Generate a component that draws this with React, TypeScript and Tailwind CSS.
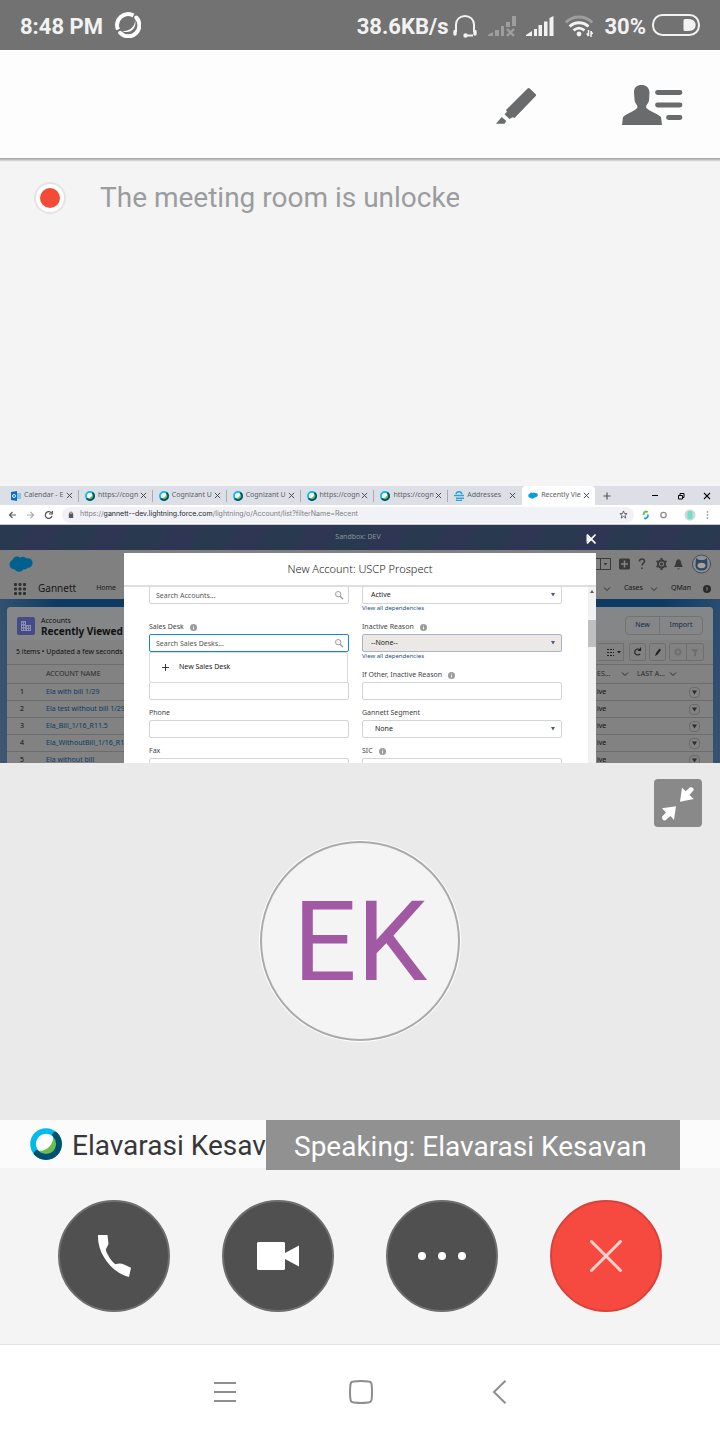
import type { ReactNode } from 'react';

function WebexMark({ className }: { className: string }) {
  return (
    <svg viewBox="0 0 32 32" className={className} aria-hidden="true">
      <circle cx="16" cy="16" r="11" fill="#6abf4b" />
      <path d="M8.500 23C4 18 5 9.500 11 6.500C15 4.500 20 5 23 8C24 15.500 18 23 8.500 23Z" fill="#ffffff" />
      <circle cx="16" cy="16" r="13" fill="none" stroke="#00bceb" strokeWidth="5.600" />
      <path d="M25.200 6.800A13 13 0 0 1 6.800 25.200" fill="none" stroke="#00506e" strokeWidth="5.800" strokeLinecap="round" />
    </svg>
  );
}

function StatusBar() {
  return (
    <header className="flex h-[50px] items-center bg-[#727272] px-5 pt-0.5 text-[22px] font-bold text-[#f2f2f2]">
      <span className="whitespace-nowrap">8:48 PM</span>
      <svg viewBox="0 0 26 26" className="-mt-0.5 ml-3 size-[26px]" aria-label="Webex running">
        <path d="M3 17.500A11 11 0 0 1 18.500 3.500" fill="none" stroke="#fff" strokeWidth="4" />
        <path d="M21.300 5.500A11 11 0 0 1 5.200 20.900" fill="none" stroke="#fff" strokeWidth="4" strokeLinecap="round" />
        <path d="M20 8C20.600 14 14.500 20 7.400 18.900C14 22.800 22.500 16.600 20 8Z" fill="#fff" />
      </svg>
      <span className="ml-auto whitespace-nowrap">38.6KB/s</span>
      <svg viewBox="0 0 24 24" className="ml-[5px] size-6" fill="none" stroke="#f2f2f2" strokeWidth="2" aria-label="Headset">
        <path d="M3 18V10.500C3 5.500 7 2 12 2S21 5.500 21 10.500V18" />
        <path d="M2 17.500V20M22 17.500V20" strokeWidth="3.400" strokeLinecap="round" />
        <path d="M12 21.500H20" />
        <circle cx="12.500" cy="21.500" r="1.200" fill="#f2f2f2" />
      </svg>
      <svg viewBox="0 0 28 22" className="ml-[11px] h-[22px] w-7" fill="#9e9e9e" aria-label="No signal on SIM 1">
        <path d="M0 21V20L5 17V21ZM7 15H11V21H7ZM13 11H16V21H13ZM18 7H22V12H18ZM24 1H28V11H24Z" />
        <path d="M19 14L26 21M26 14L19 21" stroke="#9e9e9e" strokeWidth="2.400" />
      </svg>
      <svg viewBox="0 0 28 22" className="ml-[10px] h-[22px] w-7" fill="#f2f2f2" aria-label="Full signal on SIM 2">
        <path d="M0 21V20L6 16V21ZM8 14H11V21H8ZM12.500 10H16V21H12.500ZM18 6.500H21.500V21H18ZM23.500 3L27.500 1V21H23.500Z" />
      </svg>
      <svg viewBox="0 0 28 24" className="ml-[11px] h-6 w-7" fill="none" aria-label="Wi-Fi">
        <path d="M.8 8.500C8 1.200 20 1.200 27.200 8.500" stroke="#9e9e9e" strokeWidth="3" />
        <path d="M4.500 12.500C10 7.500 18 7.500 23.500 12.500M8.500 16.300C12 13.500 16 13.500 19.500 16.300" stroke="#f2f2f2" strokeWidth="2.800" />
        <circle cx="14" cy="20" r="2.400" fill="#f2f2f2" />
        <path d="M23.500 16V22M21.800 19.500L23.500 22M26 23V17M26 17.500L27.600 20" stroke="#f2f2f2" strokeWidth="1.500" />
      </svg>
      <span className="ml-[11px]">30%</span>
      <svg viewBox="0 0 48 22" className="-mt-0.5 ml-[6px] h-[22px] w-12" aria-label="Battery at 30 percent">
        <rect x="1" y="1" width="46" height="20" rx="9.500" fill="none" stroke="#f2f2f2" strokeWidth="2" />
        <path d="M33 5H36.500C46 5 46 17 36.500 17H33Q31.500 17 31.500 15.500V6.500Q31.500 5 33 5Z" fill="#f2f2f2" />
      </svg>
    </header>
  );
}

function Toolbar() {
  return (
    <div className="relative z-10 flex h-[108px] items-center justify-end bg-[#fdfdfd] pr-9 shadow-[0_1px_0_#a9a9a9,0_2px_0_#bcbcbc,0_3px_0_#d2d2d2,0_4px_0_#ebebeb]">
      <button type="button" aria-label="Annotate" className="mr-21">
        <svg viewBox="0 -4 40 42" className="h-[42px] w-10" fill="#6a6b6d">
          <path d="M8.500 27.300L11 24.700L10 23L31.300 1.700Q32.600 .4 34 1.700L40 7.500Q40.300 8.500 39.500 9.300L18.500 31L16.500 30.300L13.500 32Z" />
          <path d="M5.700 30L10.300 34L8.500 36.700H0Z" />
        </svg>
      </button>
      <button type="button" aria-label="Participants">
        <svg viewBox="0 -1 64 44" className="h-11 w-16" fill="#6a6b6d">
          <path d="M14 9.500C14 4 17 2 21.500 2S29 4 29.500 9.500L29 17.500C28.500 20.500 26 21.500 26 24.500C30 29 36 29.500 41 34L42 42H2L3 34C8 29.500 14 29 17.500 24.500C17.500 21.500 15 20.500 14.600 17.500Z" />
          <path d="M37.500 9.500H60M37.500 22H60M48.500 34.500H60" stroke="#6a6b6d" strokeWidth="4.800" strokeLinecap="round" />
        </svg>
      </button>
    </div>
  );
}

function OutlookMark() {
  return (
    <svg viewBox="0 0 10 10" className="size-[10px] shrink-0" aria-hidden="true">
      <path d="M5 2H10V8H5Z" fill="#8cc2ea" />
      <path d="M0 1L6 0V10L0 9Z" fill="#0a6fc2" />
      <circle cx="3" cy="5" r="1.500" fill="none" stroke="#fff" strokeWidth=".9" />
    </svg>
  );
}

function AddressMark() {
  return (
    <svg viewBox="0 0 10 10" className="size-[10px] shrink-0" fill="none" stroke="#2aa6d5" strokeWidth="1.600" aria-hidden="true">
      <path d="M2 3C3 0 7 0 8 3M0 4.500H10M2 7.200H10M2 9C4 10 6 10 8 9" />
    </svg>
  );
}

function Cloud({ className, fill }: { className: string; fill: string }) {
  return (
    <svg viewBox="0 0 24 16" className={className} fill={fill} aria-hidden="true">
      <circle cx="5.500" cy="8.500" r="5" />
      <circle cx="8" cy="5" r="4.500" />
      <circle cx="14" cy="5" r="4.200" />
      <circle cx="18.800" cy="7" r="4.800" />
      <circle cx="10" cy="11" r="4.800" />
      <circle cx="15" cy="9.500" r="4" />
    </svg>
  );
}

function Cross({ className }: { className: string }) {
  return (
    <svg viewBox="0 0 8 8" className={className} stroke="currentColor" strokeWidth="1.100" aria-hidden="true">
      <path d="M1 1L7 7M7 1L1 7" />
    </svg>
  );
}

const tabs: { title: string; icon: 'mail' | 'webex' | 'address' | 'cloud' }[] = [
  { title: 'Calendar - E', icon: 'mail' },
  { title: 'https://cogn', icon: 'webex' },
  { title: 'Cognizant U', icon: 'webex' },
  { title: 'Cognizant U', icon: 'webex' },
  { title: 'https://cogn', icon: 'webex' },
  { title: 'https://cogn', icon: 'webex' },
  { title: 'Addresses', icon: 'address' },
  { title: 'Recently Vie', icon: 'cloud' },
];

function BrowserTabs() {
  return (
    <div className="flex h-[19px] shrink-0 items-center bg-[#dcdfe6] pl-[5px] text-[7px] text-[#5c6066]">
      <div className="flex h-full w-[590px] items-center">
        {tabs.map((tab, i) => {
          const active = i === 7;
          return (
            <div
              key={i}
              className={
                active
                  ? 'flex h-full min-w-0 flex-1 items-center rounded-t bg-white pl-1.5 pr-[5px]'
                  : 'flex h-3 min-w-0 flex-1 items-center border-r border-[#a8abb1] pl-1.5 pr-[5px] nth-7:border-transparent'
              }
            >
              {tab.icon === 'mail' && <OutlookMark />}
              {tab.icon === 'webex' && <WebexMark className="size-[10px] shrink-0" />}
              {tab.icon === 'address' && <AddressMark />}
              {tab.icon === 'cloud' && <Cloud className="h-[7px] w-[10px] shrink-0" fill="#0d9ddb" />}
              <span className="ml-[3px] whitespace-nowrap">{tab.title}</span>
              <button type="button" aria-label="Close tab" className="ml-auto shrink-0 text-[#44474c]">
                <Cross className="size-[7px]" />
              </button>
            </div>
          );
        })}
      </div>
      <button type="button" aria-label="New tab" className="ml-2">
        <svg viewBox="0 0 8 8" className="size-2" stroke="#55585d" strokeWidth="1.200"><path d="M4 .5V7.500M.5 4H7.500" /></svg>
      </button>
      <div className="ml-auto flex items-center gap-[18px] pr-[9px] text-black">
        <svg viewBox="0 0 8 8" className="size-2" stroke="#000" aria-label="Minimize"><path d="M1 3.500H7" /></svg>
        <svg viewBox="0 0 8 8" className="size-2" stroke="#000" fill="none" aria-label="Restore"><path d="M1.500 3.500H5.500V7H1.500ZM3 3V1.500H7V5.500H6" /></svg>
        <Cross className="size-2" />
      </div>
    </div>
  );
}

function AddressBar() {
  return (
    <div className="flex h-5 shrink-0 items-center border-b border-[#c9cacd] bg-white pl-2 pr-2">
      <svg viewBox="0 0 50 10" className="h-[10px] w-[50px] shrink-0" fill="none" strokeWidth="1.200" aria-hidden="true">
        <path d="M8 5H1.500M4.500 2L1.500 5L4.500 8" stroke="#5b5e63" />
        <path d="M19 5H25.500M22.500 2L25.500 5L22.500 8" stroke="#a8abb0" />
        <path d="M43.500 3A3.400 3.400 0 1 0 44 6M44.300 1V4H41" stroke="#4e5156" />
      </svg>
      <div className="ml-1 flex h-4 flex-1 items-center rounded-full bg-[#f1f2f6] pl-[6px] pr-[6px]">
        <svg viewBox="0 0 6 8" className="h-[7px] w-[6px]" aria-hidden="true">
          <path d="M.5 3H5.500V8H.5Z" fill="#55585d" /><path d="M1.500 3.500V2Q3 0 4.500 2V3.500" fill="none" stroke="#55585d" />
        </svg>
        <span className="ml-[6px] whitespace-nowrap font-[Inter,sans-serif] text-[7px] text-[#7b7e84]">
          https://<span className="text-[#24272b]">gannett--dev.lightning.force.com</span>/lightning/o/Account/list?filterName=Recent
        </span>
        <svg viewBox="0 0 10 10" className="ml-auto size-[9px]" fill="none" stroke="#55585d" aria-label="Bookmark"><path d="M5 1L6.100 4H9L6.700 5.900L7.500 9L5 7.200L2.500 9L3.300 5.900L1 4H3.900Z" /></svg>
      </div>
      <svg viewBox="0 0 70 12" className="ml-2 h-3 w-[70px] shrink-0" fill="none" aria-hidden="true">
        <path d="M1.500 6Q1.500 3 4 2.500L6 3" stroke="#6fbf55" strokeWidth="1.800" />
        <path d="M6 5.500Q6 9 3.500 9.500L2 9" stroke="#27a4c7" strokeWidth="1.800" />
        <circle cx="21.500" cy="6" r="2.700" stroke="#8a8d93" strokeWidth="1.300" />
        <circle cx="48" cy="6" r="5.500" fill="#cfd6dc" />
        <rect x="45.500" y="2" width="5" height="8" rx="2" fill="#6de0c6" />
        <path d="M65.500 2.500V3.500M65.500 5.500V6.500M65.500 8.500V9.500" stroke="#4a4d52" strokeWidth="1.400" />
      </svg>
    </div>
  );
}

function Chevron() {
  return (
    <svg viewBox="0 0 8 6" className="h-[6px] w-2" fill="none" stroke="#2d2d2d" strokeWidth="1" aria-hidden="true">
      <path d="M1 1.500L4 4.500L7 1.500" />
    </svg>
  );
}

function AppHeader() {
  return (
    <div className="h-[49px] shrink-0 bg-[#808080] text-[#161616]">
      <div className="flex h-7 items-center pl-[9px] pr-[9px]">
        <Cloud className="h-4 w-6" fill="#00618f" />
        <svg viewBox="0 0 116 20" className="ml-auto h-5 w-[116px]" fill="none" stroke="#3a3a3a" strokeWidth="1.300" aria-hidden="true">
          <path d="M0 4.500H15.500V15.500H0M5.500 4.500V15.500" strokeWidth="1" />
          <path d="M8.500 9H12.500L10.500 11.500Z" fill="#3a3a3a" stroke="none" />
          <rect x="24" y="4.500" width="11" height="11" rx="1.500" fill="#3a3a3a" stroke="none" />
          <path d="M29.500 6.500V13.500M26 10H33" stroke="#858585" strokeWidth="1.600" />
          <path d="M44.500 7.500Q44.500 5 47 5T49.500 7.500C49.500 9 47 9.500 47 11.500M47 13.500V15" strokeWidth="1.600" />
          <circle cx="66.500" cy="10" r="3.500" strokeWidth="2" />
          <path d="M66.500 4V6M66.500 14V16M61.500 7L63 8M70 12L71.500 13M61.500 13L63 12M70 8L71.500 7" strokeWidth="2" />
          <circle cx="66.500" cy="10" r=".9" fill="#3a3a3a" />
          <path d="M79 13C81 11 80.500 8 81.500 6.500Q83.500 4 85.500 6.500C86.500 8 86 11 88 13ZM82 14.500H85Q83.500 16.500 82 14.500Z" fill="#3a3a3a" stroke="none" />
          <circle cx="106.500" cy="10" r="9" fill="#8b9297" stroke="#454b52" strokeWidth="1" />
          <path d="M101 4L104 6H109L112 4L112.500 11C112.500 15 110 16.500 106.500 16.500S100.500 15 100.500 11Z" fill="#33475c" stroke="none" />
          <ellipse cx="106.500" cy="11.500" rx="4" ry="2.800" fill="#a0a4a6" stroke="none" />
        </svg>
      </div>
      <nav className="flex h-[21px] items-center pl-[14px] pr-[9px] text-[7px]">
        <svg viewBox="0 0 12 12" className="size-3" fill="#303030" aria-label="App launcher">
          {[0, 4.5, 9].map((y) => [0, 4.5, 9].map((x) => <rect key={x + '-' + y} x={x} y={y} width="3" height="3" rx="1" />))}
        </svg>
        <span className="ml-3 text-[10px]">Gannett</span>
        <a href="#home" className="ml-5">Home</a>
        <span className="ml-auto"><Chevron /></span>
        <a href="#cases" className="ml-[13px]">Cases</a>
        <span className="ml-[7px]"><Chevron /></span>
        <a href="#qman" className="ml-[13px]">QMan</a>
        <svg viewBox="0 0 8 8" className="ml-[12px] size-2" aria-label="Information"><circle cx="4" cy="4" r="4" fill="#2b2b2b" /><path d="M4 2V5.500" stroke="#858585" /></svg>
      </nav>
    </div>
  );
}

const accounts = [
  'Ela with bill 1/29',
  'Ela test without bill 1/29',
  'Ela_Bill_1/16_R11.5',
  'Ela_WithoutBill_1/16_R11',
  'Ela without bill',
];

function AccountList() {
  return (
    <div className="min-h-0 flex-1 bg-[linear-gradient(90deg,#4d607699_0%,transparent_8%,transparent_92%,#3d587899_100%),linear-gradient(180deg,#0b3a63,#2c4a6c)] px-[7px] pt-2">
      <section className="rounded-t bg-[#818281] text-[#111]">
        <div className="flex h-[57px] flex-col">
          <div className="flex h-[33px] items-center rounded-t bg-[#858687] pl-[10px] pr-[10px] pt-1">
            <svg viewBox="0 0 18 18" className="size-[18px]" aria-hidden="true">
              <rect width="18" height="18" rx="2" fill="#454b86" />
              <path d="M4 4H9V8H14V14H4Z" fill="#8a8dac" />
              <path d="M5.500 5.500V7M7.500 5.500V7M5.500 8.500V10M7.500 8.500V10M5.500 11.500V13M7.500 11.500V13M10.500 9.500V11M12.500 9.500V11M10.500 12V13M12.500 12V13" stroke="#454b86" />
            </svg>
            <div className="ml-[6px] leading-[10px]">
              <div className="text-[7px]">Accounts</div>
              <h2 className="whitespace-nowrap text-[10px] font-bold">Recently Viewed</h2>
            </div>
            <div className="ml-auto flex overflow-hidden rounded border border-[#727272] text-[7px] text-[#14294a]">
              <button type="button" className="h-[17px] w-[34px] border-r border-[#727272]">New</button>
              <button type="button" className="h-[17px] w-[42px]">Import</button>
            </div>
          </div>
          <div className="flex h-6 items-center pl-[9px] pr-[9px] text-[7px]">
            <span className="whitespace-nowrap">5 items • Updated a few seconds ago</span>
            <svg viewBox="0 0 106 18" className="ml-auto h-[18px] w-[106px]" fill="none" stroke="#6f6f6f" aria-hidden="true">
              <path d="M0 .5H25.500V17.500H0" />
              <rect x="31.500" y=".5" width="16" height="17" rx="2" />
              <rect x="51.500" y=".5" width="16" height="17" rx="2" />
              <rect x="71.500" y=".5" width="34" height="17" rx="2" />
              <path d="M88.500 .5V17.500" />
              <path d="M9 6.500H16M9 9.500H16M9 12.500H16" stroke="#222" strokeDasharray="2 1" />
              <path d="M19 8H23L21 10.500Z" fill="#222" stroke="none" />
              <path d="M42 7A3 3 0 1 0 42 11M42.500 4.500V7.500H40" stroke="#222" strokeWidth="1.200" />
              <path d="M57 13L58 10L61.500 5.500L63 7L59.500 11.500Z" fill="#222" stroke="none" />
              <circle cx="80" cy="9" r="2.500" strokeWidth="2" />
              <path d="M94 6.500H100L97.500 9.500V13H96.500V9.500Z" fill="#6f6f6f" />
            </svg>
          </div>
        </div>
        <table className="w-full table-fixed border-collapse text-left text-[7px]">
          <colgroup>
            <col className="w-[39px]" />
            <col />
            <col className="w-[32px]" />
            <col className="w-[48px]" />
            <col className="w-[36px]" />
          </colgroup>
          <thead>
            <tr className="h-[19px] border-y border-[#6c6c6c] text-[#2a2a2a]">
              <td />
              <th className="font-normal">ACCOUNT NAME</th>
              <th className="font-normal"><span className="flex items-center justify-between whitespace-nowrap">ES...<Chevron /></span></th>
              <th className="font-normal"><span className="flex items-center justify-between whitespace-nowrap pl-2">LAST A...<Chevron /></span></th>
              <td />
            </tr>
          </thead>
          <tbody>
            {accounts.map((name, i) => (
              <tr key={name} className="h-[17px] border-b border-[#6c6c6c]">
                <td className="pl-[13px]">{i + 1}</td>
                <td className="whitespace-nowrap"><a href="#account" className="text-[#0c3a66]">{name}</a></td>
                <td>ive</td>
                <td />
                <td>
                  <button type="button" aria-label="Row actions" className="ml-3 block rounded-sm border border-[#6a6a6a]">
                    <svg viewBox="0 0 9 9" className="size-[9px]" fill="#2b2b2b"><path d="M2 2.500H7L4.500 6.500Z" /></svg>
                  </button>
                </td>
              </tr>
            ))}
          </tbody>
        </table>
      </section>
    </div>
  );
}

function Field({ id, label, info, hint, tall, children }: { id: string; label?: string; info?: boolean; hint?: string; tall?: boolean; children: ReactNode }) {
  return (
    <div className={tall ? 'flex h-12 flex-col' : 'flex h-[38px] flex-col'}>
      <div className="flex h-[14px] shrink-0 items-center gap-[6px] text-[7px] text-[#444]">
        {label && <label htmlFor={id} className="whitespace-nowrap">{label}</label>}
        {info && (
          <svg viewBox="0 0 8 8" className="size-[7px]" aria-label="Help"><circle cx="4" cy="4" r="4" fill="#9b9b9b" /><path d="M4 3.500V6.200M4 1.700V2.700" stroke="#fff" /></svg>
        )}
      </div>
      <div className="relative h-[18px] shrink-0">{children}</div>
      {hint && <a href="#dependencies" className="text-[6px] leading-[9px] text-[#1d4f8c]">{hint}</a>}
    </div>
  );
}

const box = 'block h-[18px] w-full rounded-[2px] border border-[#d4d4d6] bg-white px-[6px] text-[7px] leading-[16px] text-[#222] outline-none placeholder:text-[#555]';

function SearchIcon() {
  return (
    <svg viewBox="0 0 10 10" className="absolute right-[5px] top-[4px] size-[10px]" fill="none" stroke="#9a9a9a" aria-hidden="true">
      <circle cx="4.200" cy="4.200" r="2.700" /><path d="M6.200 6.200L9 9" strokeWidth="1.300" />
    </svg>
  );
}

function Arrow() {
  return (
    <svg viewBox="0 0 6 4" className="absolute right-[6px] top-[7px] h-1 w-[6px]" fill="#4a5a86" aria-hidden="true"><path d="M1 0H5L3 3.500Z" /></svg>
  );
}

function AccountModal() {
  return (
    <div role="dialog" aria-label="New Account" className="flex h-[210px] w-[472px] flex-col overflow-hidden bg-white">
      <h1 className="flex h-8 shrink-0 items-center justify-center text-[11px] font-light text-[#222]">New Account: USCP Prospect</h1>
      <div className="flex min-h-0 flex-1 border-t-2 border-[#dddddf]">
        <div className="grid flex-1 grid-cols-[200px_200px] content-start gap-x-[13px] overflow-hidden pl-[25px]">
          <div className="-mt-[15px]">
            <Field id="parent" tall>
              <input id="parent" aria-label="Parent account" className={box} placeholder="Search Accounts..." />
              <SearchIcon />
            </Field>
            <Field id="desk" label="Sales Desk" info tall>
              <input id="desk" className={box + ' border-[#1683e0]!'} placeholder="Search Sales Desks..." />
              <SearchIcon />
              <button type="button" className="absolute left-0 top-[18px] z-10 flex h-[31px] w-[199px] items-center rounded-[2px] border border-[#dcd8dc] bg-white pl-3 text-[7px] text-[#222]">
                <svg viewBox="0 0 8 8" className="mr-[10px] size-[7px]" stroke="#222" aria-hidden="true"><path d="M4 0V8M0 4H8" /></svg>
                New Sales Desk
              </button>
            </Field>
            <Field id="other"><input id="other" aria-label="Other" className={box} /></Field>
            <Field id="phone" label="Phone"><input id="phone" className={box} /></Field>
            <Field id="fax" label="Fax"><input id="fax" className={box} /></Field>
          </div>
          <div className="-mt-[15px]">
            <Field id="status" hint="View all dependencies" tall>
              <select id="status" aria-label="Status" className={box + ' appearance-none pl-2!'}><option>Active</option></select>
              <Arrow />
            </Field>
            <Field id="reason" label="Inactive Reason" info hint="View all dependencies" tall>
              <select id="reason" className={box + ' appearance-none border-[#a9b3c6]! bg-[#ece8e6]! pl-2!'}><option>--None--</option></select>
              <Arrow />
            </Field>
            <Field id="otherReason" label="If Other, Inactive Reason" info><input id="otherReason" className={box} /></Field>
            <Field id="segment" label="Gannett Segment">
              <select id="segment" className={box + ' appearance-none pl-3!'}><option>None</option></select>
              <Arrow />
            </Field>
            <Field id="sic" label="SIC" info><input id="sic" className={box} /></Field>
          </div>
        </div>
        <div className="w-2 bg-[#f1f1f3]">
          <svg viewBox="0 0 8 8" className="size-2" fill="#555" aria-hidden="true"><path d="M2 6H6L4 3Z" /></svg>
          <div className="mt-[25px] h-[27px] bg-[#bfbfc1]" />
        </div>
      </div>
    </div>
  );
}

function SharedScreen() {
  return (
    <section aria-label="Shared screen" className="relative flex h-[277px] flex-col overflow-hidden font-['Noto_Sans',sans-serif]">
      <BrowserTabs />
      <AddressBar />
      <div className="relative flex h-[25px] shrink-0 items-center justify-center bg-[repeating-linear-gradient(120deg,#29394f_0_22px,#2e3653_32px_50px,#29394f_60px)] pr-1 text-[7px] text-[#8b93a0]">
        Sandbox: DEV
        <button type="button" aria-label="Close dialog" className="absolute right-[123px] top-[8px]">
          <svg viewBox="0 0 12 12" className="size-3" fill="none" stroke="#fff" strokeWidth="1.800"><path d="M2 1.500L10.500 10.500M10.500 1.500L2 10.500" /><path d="M1.500 2V9.500L4 7.500L7 8Z" fill="#fff" stroke="none" /></svg>
        </button>
      </div>
      <AppHeader />
      <AccountList />
      <div className="absolute inset-x-0 bottom-0 flex justify-center"><AccountModal /></div>
    </section>
  );
}

function ControlButton({ label, danger, children }: { label: string; danger?: boolean; children: ReactNode }) {
  return (
    <button
      type="button"
      aria-label={label}
      className={
        danger
          ? 'flex size-28 items-center justify-center rounded-full border-2 border-[#d9423b] bg-[#f6493f]'
          : 'flex size-28 items-center justify-center rounded-full border-2 border-[#6e6e6e] bg-[#505050]'
      }
    >
      {children}
    </button>
  );
}

export default function App() {
  return (
    <main className="flex min-h-screen w-full flex-col bg-[#f4f4f4] font-[Roboto,sans-serif]">
      <StatusBar />
      <Toolbar />
      <section className="flex min-h-[328px] flex-1 items-start pl-[34px] pt-6">
        <span className="flex size-8 items-center justify-center rounded-full bg-[#e4e4e4]">
          <span className="flex size-7 items-center justify-center rounded-full bg-white">
            <span className="size-5 rounded-full bg-[#f44b37]" />
          </span>
        </span>
        <p className="ml-[34px] w-[359px] overflow-hidden whitespace-nowrap text-[28px] leading-8 text-[#9b9c9e]">The meeting room is unlocked</p>
      </section>
      <SharedScreen />
      <section className="relative flex h-[357px] items-start justify-center bg-[#eaeaea] pt-[78px]">
        <button type="button" aria-label="Exit full view" className="absolute right-[18px] top-4 size-12 rounded bg-[#898989]">
          <svg viewBox="0 0 48 48" className="size-12" fill="#fff">
            <path d="M26 22.700L28 8.700L31.700 12.300L36 8.300Q39.500 7.500 39.700 11L35.500 16L39.700 20Z" />
            <path d="M22 27.300L8 29.300L12 33.500L8 37.800Q8 42 11.500 41.300L16.500 37L20 41Z" />
          </svg>
        </button>
        <div className="flex size-[200px] items-center justify-center rounded-full border-2 border-[#aaaaaa] bg-[#f4f4f4] pt-0.5 text-[112px] leading-none text-[#a259a4] ring-1 ring-white">EK</div>
      </section>
      <section className="relative flex h-12 items-center bg-[#fbfbfb] pl-[30px]">
        <WebexMark className="size-8" />
        <span className="ml-[10px] whitespace-nowrap pt-1 text-[28px] text-[#36373a]">Elavarasi Kesavan</span>
        <div role="status" className="absolute right-10 top-0 flex h-[50px] w-[414px] items-center whitespace-nowrap bg-[#919191] pl-7 pt-1 text-[28px] text-white">Speaking: Elavarasi Kesavan</div>
      </section>
      <section className="flex h-44 items-center justify-center gap-[52px]">
        <ControlButton label="Audio">
          <svg viewBox="0 0 34 44" className="h-11 w-[34px]" fill="#fff"><path d="M1 1H10.500L11.500 10L8.800 15.500Q9 18 11 21C13 25 16 28.500 18.500 30.300Q23 28.400 27 30.500L34 33.800L32 43C18 40 0 22 1 1Z" /></svg>
        </ControlButton>
        <ControlButton label="Video">
          <svg viewBox="0 0 42 28" className="h-7 w-[42px]" fill="#fff"><path d="M1 0H27L28 1V11L42 3.500V24.500L28 17V27L27 28H1L0 27V1Z" /></svg>
        </ControlButton>
        <ControlButton label="More">
          <svg viewBox="0 0 48 8" className="h-2 w-12" fill="#fff"><circle cx="4" cy="4" r="4" /><circle cx="24" cy="4" r="4" /><circle cx="44" cy="4" r="4" /></svg>
        </ControlButton>
        <ControlButton label="Leave meeting" danger>
          <svg viewBox="0 0 32 32" className="size-8" stroke="#fdd3d0" strokeWidth="3" strokeLinecap="round"><path d="M1.500 1.500L30.500 30.500M30.500 1.500L1.500 30.500" /></svg>
        </ControlButton>
      </section>
      <nav className="flex h-24 items-center justify-center gap-28 border-t border-[#e2e2e2] bg-white pb-px pl-0.5">
        <button type="button" aria-label="Menu"><svg viewBox="0 0 24 24" className="size-6" stroke="#8e8e8e" strokeWidth="2"><path d="M1 3H23M1 12H23M1 21H23" /></svg></button>
        <button type="button" aria-label="Home"><svg viewBox="0 0 24 24" className="size-6" fill="none" stroke="#8e8e8e" strokeWidth="2"><path d="M4.500 1.500Q12 .5 19.500 1.500Q22.300 1.700 22.600 4.500Q23.500 12 22.600 19.500Q22.300 22.300 19.500 22.600Q12 23.500 4.500 22.600Q1.700 22.300 1.500 19.500Q.5 12 1.500 4.500Q1.700 1.700 4.500 1.500Z" /></svg></button>
        <button type="button" aria-label="Back"><svg viewBox="0 0 24 24" className="size-6" fill="none" stroke="#8e8e8e" strokeWidth="2"><path d="M20.500 .7L9 12L20.500 23.300" /></svg></button>
      </nav>
    </main>
  );
}
